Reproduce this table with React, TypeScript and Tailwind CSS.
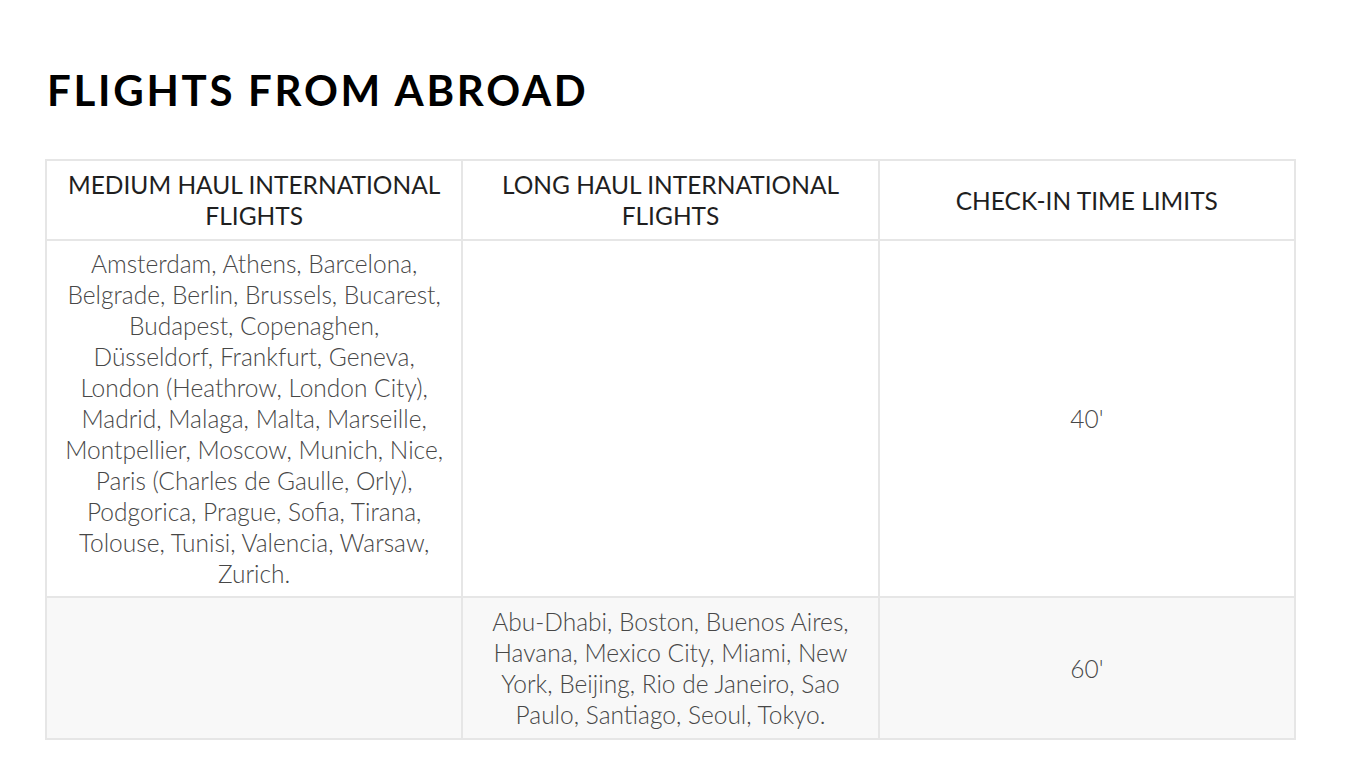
const medium = [
    "Amsterdam, Athens, Barcelona,",
    "Belgrade, Berlin, Brussels, Bucarest,",
    "Budapest, Copenaghen,",
    "Düsseldorf, Frankfurt, Geneva,",
    "London (Heathrow, London City),",
    "Madrid, Malaga, Malta, Marseille,",
    "Montpellier, Moscow, Munich, Nice,",
    "Paris (Charles de Gaulle, Orly),",
    "Podgorica, Prague, Sofia, Tirana,",
    "Tolouse, Tunisi, Valencia, Warsaw,",
    "Zurich.",
];

const long = [
    "Abu-Dhabi, Boston, Buenos Aires,",
    "Havana, Mexico City, Miami, New",
    "York, Beijing, Rio de Janeiro, Sao",
    "Paulo, Santiago, Seoul, Tokyo.",
];

const Lines = ({ lines }: { lines: string[] }) => (
    <>
        {lines.map((l) => (
            <span key={l} className="block whitespace-nowrap">{l}</span>
        ))}
    </>
);

const App = () => {
    return (
        <div className="min-h-screen bg-white px-[45px] pt-[66px] font-['Lato',sans-serif]">
            <h1 className="pl-[2px] text-[42px] font-bold leading-[48px] tracking-[0.065em] text-black">
                FLIGHTS FROM ABROAD
            </h1>

            <table className="mt-[45px] w-[1251px] table-fixed border-collapse text-center text-[24.5px] leading-[31px]">
                <thead>
                    <tr className="text-[#1f1f1f]">
                        <th className="h-[80px] border-2 border-[#e6e6e6] px-4 py-[8px] font-normal">
                            <Lines lines={["MEDIUM HAUL INTERNATIONAL", "FLIGHTS"]} />
                        </th>
                        <th className="border-2 border-[#e6e6e6] px-4 py-[8px] font-normal">
                            <Lines lines={["LONG HAUL INTERNATIONAL", "FLIGHTS"]} />
                        </th>
                        <th className="border-2 border-[#e6e6e6] px-4 py-[8px] font-normal">
                            CHECK-IN TIME LIMITS
                        </th>
                    </tr>
                </thead>
                <tbody className="font-light text-[#474747]">
                    <tr>
                        <td className="border-2 border-[#e6e6e6] px-4 py-[7px]">
                            <Lines lines={medium} />
                        </td>
                        <td className="border-2 border-[#e6e6e6] px-4 py-[7px]"></td>
                        <td className="border-2 border-[#e6e6e6] px-4 py-[7px]">40'</td>
                    </tr>
                    <tr className="bg-[#f8f8f8]">
                        <td className="border-2 border-[#e6e6e6] px-4 py-[8px]"></td>
                        <td className="border-2 border-[#e6e6e6] px-4 py-[8px]">
                            <Lines lines={long} />
                        </td>
                        <td className="border-2 border-[#e6e6e6] px-4 py-[8px]">60'</td>
                    </tr>
                </tbody>
            </table>
        </div>
    );
};

export default App;
